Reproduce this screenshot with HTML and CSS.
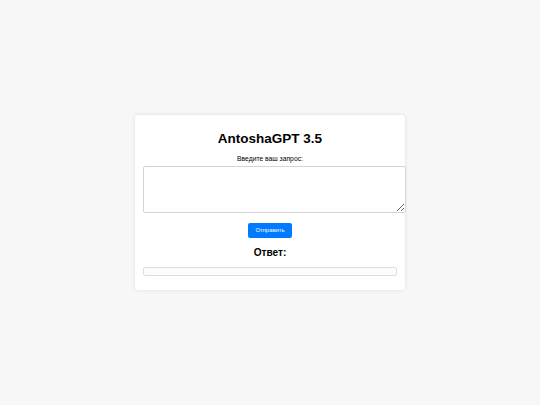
FILE: index.html
```html
<!DOCTYPE html>
<html lang="ru">
<head>
<meta charset="utf-8">
<title>AntoshaGPT 3.5</title>
<link rel="stylesheet" href="styles.css">
</head>
<body>
<div class="card">
  <h1 class="title">AntoshaGPT 3.5</h1>
  <label class="label" for="prompt">Введите ваш запрос:</label>
  <textarea class="prompt" id="prompt"></textarea>
  <button class="send" type="button">Отправить</button>
  <h2 class="answer-title">Ответ:</h2>
  <div class="answer"></div>
</div>
</body>
</html>
```
FILE: styles.css
```css
html, body {
  margin: 0;
  padding: 0;
}
body {
  height: 405px;
  background: #f7f7f7;
  font-family: "Liberation Sans", Arial, sans-serif;
  display: flex;
  justify-content: center;
  align-items: center;
}
.card {
  width: 270px;
  height: 175px;
  box-sizing: border-box;
  padding: 8.4px;
  background: #fff;
  border-radius: 3.4px;
  box-shadow: 0 0 4px rgba(0, 0, 0, 0.1);
  text-align: center;
  display: flex;
  flex-direction: column;
  align-items: flex-start;
}
.title {
  align-self: stretch;
  margin: 8px 0 0;
  font-size: 13.5px;
  line-height: 16px;
  font-weight: bold;
  color: #000;
}
.label {
  align-self: stretch;
  margin-top: 7.3px;
  font-size: 6.75px;
  line-height: 8px;
  color: #000;
}
.prompt {
  display: block;
  margin: 3.2px 0 0;
  flex: none;
  width: 262.5px;
  height: 47.3px;
  box-sizing: border-box;
  padding: 4.2px;
  border: 1px solid #d4d4d4;
  border-radius: 2px;
  font-family: "Liberation Sans", Arial, sans-serif;
  font-size: 6.75px;
  background: #fff;
}
.send {
  align-self: center;
  margin-top: 10px;
  height: 15px;
  width: 44px;
  padding: 0;
  border: none;
  border-radius: 2px;
  background: #007bff;
  color: #fff;
  font-family: "Liberation Sans", Arial, sans-serif;
  font-size: 5.9px;
  line-height: 15px;
}
.answer-title {
  align-self: stretch;
  margin: 8.4px 0 0;
  font-size: 10.1px;
  line-height: 12px;
  font-weight: bold;
  color: #000;
}
.answer {
  align-self: stretch;
  margin-top: 8.6px;
  height: 9px;
  box-sizing: border-box;
  border: 1px solid #dedede;
  border-radius: 2px;
  background: #fcfcfc;
}
```
